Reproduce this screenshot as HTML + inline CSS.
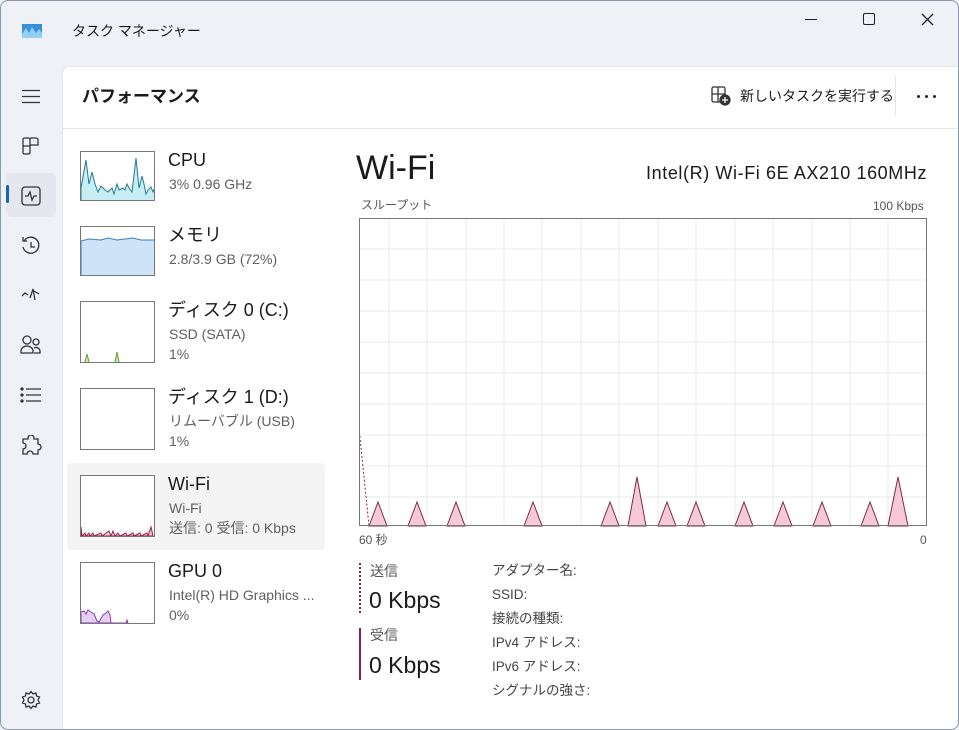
<!DOCTYPE html>
<html><head><meta charset="utf-8"><style>
*{margin:0;padding:0;box-sizing:border-box}
body{width:959px;height:730px;overflow:hidden;background:#eef2f6;font-family:"Liberation Sans","Noto Sans CJK JP",sans-serif;color:#1a1a1a;position:relative}
.abs{position:absolute}
.main{position:absolute;left:62px;top:66px;width:897px;height:664px;background:#fff;border-top-left-radius:8px;border:1px solid #e3e6ea}
.t{position:absolute;white-space:nowrap;line-height:1.2}
.sub{color:#5f5f5f;font-size:14px;line-height:16px}
.thumb{position:absolute;left:80px;width:75px;height:62px;border:1px solid #777;background:#fff;overflow:hidden}
.lbl{color:#444;font-size:13.5px;line-height:16px}
</style></head><body>
<div class="abs" style="left:0;top:0;width:959px;height:730px;border:1px solid #8a9aa8;border-radius:8px;pointer-events:none;z-index:5"></div>
<svg class="abs" style="left:22px;top:24px" width="20" height="14"><rect width="20" height="14" fill="#3a8fd9"/><path d="M0 10 L4 4 L7 9 L10 3 L14 9 L17 5 L20 9 V14 H0Z" fill="#8fd0f5"/></svg>
<div class="t" style="left:72px;top:23px;font-size:14px">タスク マネージャー</div>
<div class="abs" style="left:805px;top:19px;width:12px;height:1px;background:#222"></div>
<div class="abs" style="left:863px;top:13px;width:12px;height:12px;border:1.3px solid #222;border-radius:2px"></div>
<svg class="abs" style="left:921px;top:13px" width="13" height="13"><path d="M1 1L12 12M12 1L1 12" stroke="#222" stroke-width="1.3"/></svg>
<svg class="abs" style="left:21px;top:89px" width="20" height="15"><path d="M1 1.5H19M1 7.5H19M1 13.5H19" stroke="#333" stroke-width="1.3"/></svg>
<svg class="abs" style="left:22px;top:137px" width="18" height="18" fill="none" stroke="#333" stroke-width="1.3"><rect x="1" y="1" width="7" height="16" rx="1.5"/><path d="M8 1H14a2 2 0 0 1 2 2V8H8M1 9H8"/></svg>
<div class="abs" style="left:6px;top:173px;width:50px;height:44px;background:#e4e8ee;border-radius:5px"></div>
<div class="abs" style="left:6px;top:185px;width:3px;height:18px;background:#1a64b4;border-radius:2px"></div>
<svg class="abs" style="left:21px;top:186px" width="20" height="20" fill="none" stroke="#333" stroke-width="1.3"><rect x="1" y="1" width="18" height="18" rx="3"/><path d="M4 10H7L9 6L11 14L13 10H16"/></svg>
<svg class="abs" style="left:20px;top:235px" width="22" height="22" fill="none" stroke="#333" stroke-width="1.3"><path d="M4 6A8 8 0 1 1 3 12"/><path d="M3 2V6H7M11 7V12H15"/></svg>
<svg class="abs" style="left:20px;top:286px" width="22" height="16" fill="none" stroke="#333" stroke-width="1.3"><path d="M2 10L5 7L8 9M10 12L13 3L15 14M14 5L19 8"/></svg>
<svg class="abs" style="left:20px;top:334px" width="22" height="22" fill="none" stroke="#333" stroke-width="1.3"><circle cx="7" cy="6" r="4"/><circle cx="16" cy="8" r="3"/><path d="M1 17a6 5 0 0 1 12 0v2H1ZM14 19h6v-2a4 4 0 0 0-6-3"/></svg>
<svg class="abs" style="left:20px;top:387px" width="22" height="16" stroke="#333" stroke-width="1.3"><path d="M6 2H21M6 8H21M6 14H21"/><circle cx="2" cy="2" r="1" fill="#333"/><circle cx="2" cy="8" r="1" fill="#333"/><circle cx="2" cy="14" r="1" fill="#333"/></svg>
<svg class="abs" style="left:20px;top:435px" width="22" height="22" fill="none" stroke="#333" stroke-width="1.3"><path d="M8 3a3 3 0 0 1 6 0v1h4v5a3 3 0 0 1 0 6v4h-5a3 3 0 0 0-6 0H3v-5a3 3 0 0 0 0-6V4h5Z"/></svg>
<svg class="abs" style="left:21px;top:690px" width="20" height="20" fill="none" stroke="#333" stroke-width="1.3"><circle cx="10" cy="10" r="3"/><path d="M10 1.5l2 2.5 3-1 .5 3 3 1-1.5 3 1.5 3-3 1-.5 3-3-1-2 2.5-2-2.5-3 1-.5-3-3-1 1.5-3-1.5-3 3-1 .5-3 3 1z"/></svg>
<div class="main"></div>
<div class="t" style="left:82px;top:87px;font-size:17px;font-weight:bold;line-height:20px">パフォーマンス</div>
<svg class="abs" style="left:711px;top:86px" width="20" height="20" fill="none" stroke="#333" stroke-width="1.3"><rect x="1" y="1" width="13" height="15" rx="1.5"/><path d="M7 1V16M1 8H14"/><circle cx="14" cy="14" r="5" fill="#333"/><path d="M14 11V17M11 14H17" stroke="#fff"/></svg>
<div class="t" style="left:740px;top:88px;font-size:14px;line-height:17px">新しいタスクを実行する</div>
<div class="abs" style="left:895px;top:76px;width:1px;height:40px;background:#e6e6e6"></div>
<div class="abs" style="left:917px;top:95px;width:3px;height:3px;background:#222;border-radius:50%"></div>
<div class="abs" style="left:925px;top:95px;width:3px;height:3px;background:#222;border-radius:50%"></div>
<div class="abs" style="left:933px;top:95px;width:3px;height:3px;background:#222;border-radius:50%"></div>
<div class="abs" style="left:63px;top:128px;width:895px;height:1px;background:#e5e5e5"></div>
<div class="thumb" style="top:151px;height:50px"><svg width="75" height="50"><path d="M0 49V36L5 8L8 32L11 20L14 32L17 40L20 34L24 38L27 40L31 36L33 42L36 32L38 38L42 36L44 38L46 32L48 36L51 40L55 6L58 36L61 24L63 32L65 42L67 38L70 35L72 40L75 33V49Z" fill="#c7eef5" stroke="#1f7a94" stroke-width="1"/></svg></div>
<div class="t" style="left:168px;top:150px;font-size:18px">CPU</div>
<div class="t sub" style="left:169px;top:176px">3% 0.96 GHz</div>
<div class="thumb" style="top:226px;height:50px"><svg width="75" height="50"><path d="M0 14L8 12L20 13L27 11L36 13L44 12L52 11L60 13L75 13V50H0Z" fill="#cde3f7" stroke="#3b7fc4" stroke-width="1"/></svg></div>
<div class="t" style="left:168px;top:225px;font-size:18px">メモリ</div>
<div class="t sub" style="left:169px;top:251px">2.8/3.9 GB (72%)</div>
<div class="thumb" style="top:301px"><svg width="75" height="62"><path d="M4 60L6 52L8 60M34 60L36 50L38 60" fill="#cfe8b8" stroke="#5f9f30"/></svg></div>
<div class="t" style="left:168px;top:300px;font-size:18px">ディスク 0 (C:)</div>
<div class="t sub" style="left:169px;top:326px">SSD (SATA)</div>
<div class="t sub" style="left:169px;top:346px">1%</div>
<div class="thumb" style="top:388px"></div>
<div class="t" style="left:168px;top:387px;font-size:18px">ディスク 1 (D:)</div>
<div class="t sub" style="left:169px;top:413px">リムーバブル (USB)</div>
<div class="t sub" style="left:169px;top:433px">1%</div>
<div class="abs" style="left:67px;top:463px;width:258px;height:87px;background:#f4f4f4;border-radius:4px"></div>
<div class="thumb" style="top:475px"><svg width="75" height="62"><path d="M0 60V51L1 60L4 57L5 60L8 57L9 60L12 57L13 60L20 57L21 60L28 55L30 60L32 55L34 60L37 57L39 60L45 57L46 60L52 57L53 60L59 57L60 60L66 57L67 60L70 51L72 60Z" fill="#f5c6d4" stroke="#9c2050" stroke-width="1"/></svg></div>
<div class="t" style="left:168px;top:474px;font-size:18px">Wi-Fi</div>
<div class="t sub" style="left:169px;top:500px">Wi-Fi</div>
<div class="t sub" style="left:169px;top:520px">送信: 0 受信: 0 Kbps</div>
<div class="thumb" style="top:562px"><svg width="75" height="62"><path d="M0 60V49L3 48L5 51L7 47L10 49L13 51L16 58L18 59L22 52L25 50L27 48L29 52L30 60L45 60L46 57L47 60Z" fill="#e6d0f2" stroke="#8a3cb0" stroke-width="1"/></svg></div>
<div class="t" style="left:168px;top:561px;font-size:18px">GPU 0</div>
<div class="t sub" style="left:169px;top:587px">Intel(R) HD Graphics ...</div>
<div class="t sub" style="left:169px;top:607px">0%</div>
<div class="t" style="left:356px;top:148px;font-size:34px">Wi-Fi</div>
<div class="t" style="left:646px;top:163px;font-size:18px;letter-spacing:0.6px">Intel(R) Wi-Fi 6E AX210 160MHz</div>
<div class="t lbl" style="left:361px;top:197px;font-size:12px;color:#555">スループット</div>
<div class="t lbl" style="left:873px;top:198px;font-size:12px;color:#555">100 Kbps</div>
<svg class="abs" style="left:359px;top:218px" width="569" height="309">
<g stroke="#e8e8e8" stroke-width="1">
<path d="M30 0V308M68 0V308M107 0V308M145 0V308M183 0V308M222 0V308M260 0V308M299 0V308M337 0V308M376 0V308M414 0V308M453 0V308M491 0V308M529 0V308"/>
<path d="M0 31H568M0 62H568M0 93H568M0 124H568M0 155H568M0 186H568M0 217H568M0 248H568M0 279H568"/>
</g>
<path d="M0 210L10 308" stroke="#8a2050" stroke-dasharray="2,2" fill="none"/>
<g fill="#f7c9d8" stroke="#7a2a4a" stroke-width="1">
<path d="M10 308L19 284L28 308Z"/><path d="M49 308L58 284L67 308Z"/><path d="M88 308L97 284L106 308Z"/><path d="M165 308L174 284L183 308Z"/><path d="M242 308L251 284L260 308Z"/><path d="M269 308L278 259L287 308Z"/><path d="M299 308L308 284L317 308Z"/><path d="M328 308L337 284L346 308Z"/><path d="M376 308L385 284L394 308Z"/><path d="M415 308L424 284L433 308Z"/><path d="M454 308L463 284L472 308Z"/><path d="M502 308L511 284L520 308Z"/><path d="M529 308L539 259L549 308Z"/>
</g>
<rect x="0.5" y="0.5" width="567" height="307" fill="none" stroke="#777"/>
</svg>
<div class="t lbl" style="left:359px;top:532px;font-size:12px;color:#555">60 秒</div>
<div class="t lbl" style="left:920px;top:532px;font-size:12px;color:#555">0</div>
<div class="abs" style="left:359px;top:563px;width:0;height:50px;border-left:2px dotted #8a2050"></div>
<div class="t lbl" style="left:370px;top:563px;font-size:14px;color:#555">送信</div>
<div class="t" style="left:369px;top:587px;font-size:23px;line-height:26px">0 Kbps</div>
<div class="abs" style="left:359px;top:628px;width:2px;height:52px;background:#8a2050"></div>
<div class="t lbl" style="left:370px;top:627px;font-size:14px;color:#555">受信</div>
<div class="t" style="left:369px;top:652px;font-size:23px;line-height:26px">0 Kbps</div>
<div class="t lbl" style="left:492px;top:563px">アダプター名:</div>
<div class="t lbl" style="left:492px;top:587px">SSID:</div>
<div class="t lbl" style="left:492px;top:611px">接続の種類:</div>
<div class="t lbl" style="left:492px;top:635px">IPv4 アドレス:</div>
<div class="t lbl" style="left:492px;top:659px">IPv6 アドレス:</div>
<div class="t lbl" style="left:492px;top:683px">シグナルの強さ:</div>
</body></html>
